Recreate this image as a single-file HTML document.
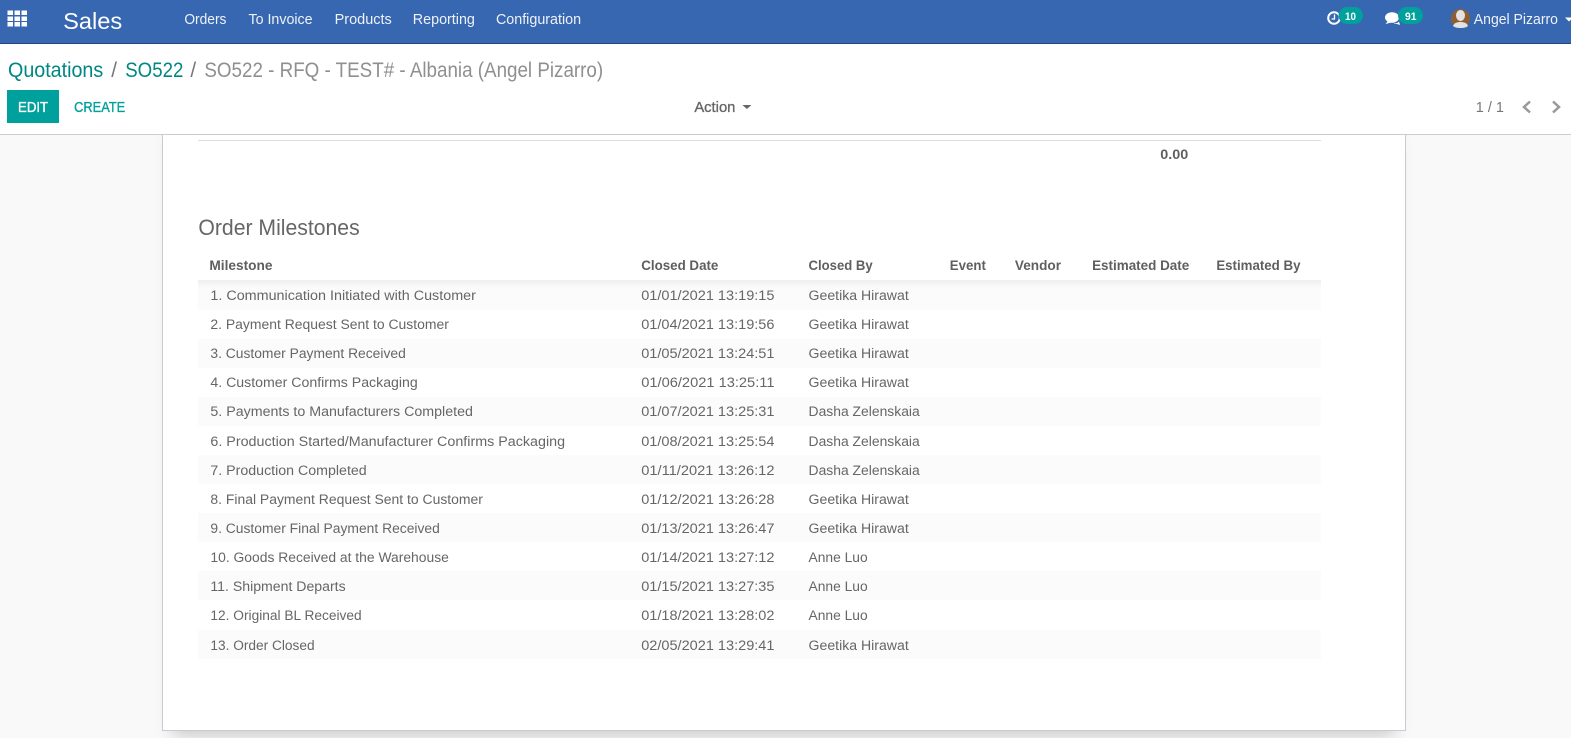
<!DOCTYPE html>
<html><head><meta charset="utf-8"><title>Sales</title>
<style>
html,body{margin:0;padding:0;width:1571px;height:738px;overflow:hidden;background:#f9f9f9}
svg{position:absolute;left:0;top:0;display:block}
text{font-family:"Liberation Sans",sans-serif;white-space:pre}
.nav{font-size:14.500px;fill:#eef2f9}
.t{font-size:14px;fill:#666}
.h{font-size:14px;font-weight:bold;fill:#5f5f5f}
.bc{font-size:20.800px}
.m{font-size:15px;stroke-width:.35}
</style></head><body>
<svg width="1571" height="738" viewBox="0 0 1571 738" xmlns="http://www.w3.org/2000/svg">
<defs>
<filter id="s" x="-10%" y="-10%" width="120%" height="120%"><feGaussianBlur stdDeviation="9"/></filter>
<linearGradient id="g" x1="0" y1="0" x2="0" y2="1"><stop offset="0" stop-color="#000" stop-opacity=".05"/><stop offset="1" stop-color="#000" stop-opacity="0"/></linearGradient>
</defs>
<rect width="1571" height="738" fill="#f9f9f9"/>
<!-- sheet -->
<rect x="172" y="135" width="1223" height="600" fill="#000" opacity=".2" filter="url(#s)"/>
<rect x="162.500" y="125.500" width="1243" height="605" fill="#fff" stroke="#c9cbd3"/>
<!-- control panel -->
<rect y="44" width="1571" height="90" fill="#fff"/>
<rect y="134" width="1571" height="1" fill="#ccc"/>
<!-- navbar -->
<rect width="1571" height="43" fill="#3767b1"/>
<rect y="43" width="1571" height="1" fill="#25467c"/>
<g fill="#fff">
<rect x="7.500" y="10.500" width="5.500" height="4.500"/><rect x="14.500" y="10.500" width="5.500" height="4.500"/><rect x="21.500" y="10.500" width="5.500" height="4.500"/>
<rect x="7.500" y="16.500" width="5.500" height="4.500"/><rect x="14.500" y="16.500" width="5.500" height="4.500"/><rect x="21.500" y="16.500" width="5.500" height="4.500"/>
<rect x="7.500" y="22" width="5.500" height="4.500"/><rect x="14.500" y="22" width="5.500" height="4.500"/><rect x="21.500" y="22" width="5.500" height="4.500"/>
</g>
<!-- activity -->
<circle cx="1334" cy="18" r="5.800" fill="none" stroke="#fff" stroke-width="2"/>
<path d="M1334.500 14.500v4.500h-3" fill="none" stroke="#fff" stroke-width="1.300"/>
<rect x="1338.500" y="7" width="24.500" height="17" rx="8.500" fill="#00a09d"/>
<text x="1345" y="20" font-size="11" font-weight="bold" fill="#fff" textLength="11" lengthAdjust="spacingAndGlyphs">10</text>
<!-- messages -->
<ellipse cx="1392" cy="17.500" rx="7" ry="5.300" fill="#fff"/>
<path d="M1388 21l-2.500 3 6-1.500z" fill="#fff"/>
<path d="M1394 23.500c2 0 4-.5 5-2l1 3.500-3-1h-3z" fill="#fff"/>
<rect x="1398" y="7" width="25" height="17" rx="8.500" fill="#00a09d"/>
<text x="1405" y="20" font-size="11" font-weight="bold" fill="#fff" textLength="11.500" lengthAdjust="spacingAndGlyphs">91</text>
<!-- user -->
<circle cx="1460.500" cy="18.500" r="9.500" fill="#8e5f33"/>
<ellipse cx="1460.500" cy="15.500" rx="4.500" ry="5.500" fill="#e3e3e3"/>
<path d="M1453 26c1-3 4-4 7.500-4s6.500 1 7.500 4c-2 1.500-4 2-7.500 2s-5.500-.5-7.500-2z" fill="#e3e3e3"/>
<path d="M1565 17.500h8l-4 4z" fill="#fff"/>
<!-- button -->
<rect x="7" y="90" width="52" height="33" fill="#00a09d"/>
<!-- pager arrows -->
<path d="M1530 101.500l-6 5.500 6 5.500" fill="none" stroke="#999" stroke-width="2.500"/>
<path d="M1553 101.500l6 5.500-6 5.500" fill="none" stroke="#999" stroke-width="2.500"/>
<!-- sheet content blocks -->
<rect x="198" y="140" width="1123" height="1" fill="#ddd"/>
<g fill="#fbfbfb">
<rect x="198" y="280" width="1123" height="30"/>
<rect x="198" y="339" width="1123" height="29"/>
<rect x="198" y="397" width="1123" height="29"/>
<rect x="198" y="455" width="1123" height="29"/>
<rect x="198" y="513" width="1123" height="29"/>
<rect x="198" y="571" width="1123" height="29"/>
<rect x="198" y="630" width="1123" height="29"/>
</g>
<rect x="198" y="280" width="1123" height="8" fill="url(#g)"/>
<g transform="scale(1.00191,1)">
<text x="63" y="29" font-size="23.500" fill="#fff" textLength="59" lengthAdjust="spacingAndGlyphs">Sales</text>
<text class="nav" x="184" y="24" textLength="42" lengthAdjust="spacingAndGlyphs">Orders</text>
<text class="nav" x="248" y="24" textLength="64" lengthAdjust="spacingAndGlyphs">To Invoice</text>
<text class="nav" x="334" y="24" textLength="57" lengthAdjust="spacingAndGlyphs">Products</text>
<text class="nav" x="412" y="24" textLength="62" lengthAdjust="spacingAndGlyphs">Reporting</text>
<text class="nav" x="495" y="24" textLength="85" lengthAdjust="spacingAndGlyphs">Configuration</text>
<text class="nav" x="1471" y="24" textLength="84" lengthAdjust="spacingAndGlyphs">Angel Pizarro</text>
<text class="bc" x="8" y="77" fill="#008784" textLength="95" lengthAdjust="spacingAndGlyphs">Quotations</text>
<text class="bc" x="111" y="77" fill="#777">/</text>
<text class="bc" x="125" y="77" fill="#008784" textLength="58" lengthAdjust="spacingAndGlyphs">SO522</text>
<text class="bc" x="190" y="77" fill="#777">/</text>
<text class="bc" x="204" y="77" fill="#8f8f8f" textLength="398" lengthAdjust="spacingAndGlyphs">SO522 - RFQ - TEST# - Albania (Angel Pizarro)</text>
<text class="m" x="18" y="112" fill="#fff" stroke="#fff" textLength="30" lengthAdjust="spacingAndGlyphs">EDIT</text>
<text class="m" x="74" y="112" fill="#00a09d" stroke="#00a09d" textLength="51" lengthAdjust="spacingAndGlyphs">CREATE</text>
<text class="m" x="693" y="112" fill="#666" stroke="#666" textLength="41" lengthAdjust="spacingAndGlyphs">Action</text>
<path d="M741 105h9l-4.500 4z" fill="#666"/>
<text x="1473" y="112" font-size="14.500" fill="#777" textLength="28" lengthAdjust="spacingAndGlyphs">1 / 1</text>
<text x="1158" y="159" font-size="14" font-weight="bold" fill="#5f5f5f" textLength="28" lengthAdjust="spacingAndGlyphs">0.00</text>
<text x="198" y="235" font-size="21.800" fill="#666" textLength="161" lengthAdjust="spacingAndGlyphs">Order Milestones</text>
<text class="h" x="209" y="270" textLength="63" lengthAdjust="spacingAndGlyphs">Milestone</text>
<text class="h" x="640" y="270" textLength="77" lengthAdjust="spacingAndGlyphs">Closed Date</text>
<text class="h" x="807" y="270" textLength="64" lengthAdjust="spacingAndGlyphs">Closed By</text>
<text class="h" x="948" y="270" textLength="36" lengthAdjust="spacingAndGlyphs">Event</text>
<text class="h" x="1013" y="270" textLength="46" lengthAdjust="spacingAndGlyphs">Vendor</text>
<text class="h" x="1090" y="270" textLength="97" lengthAdjust="spacingAndGlyphs">Estimated Date</text>
<text class="h" x="1214" y="270" textLength="84" lengthAdjust="spacingAndGlyphs">Estimated By</text>
<text class="t" x="210" y="300" textLength="265" lengthAdjust="spacingAndGlyphs">1. Communication Initiated with Customer</text>
<text class="t" x="640" y="300" textLength="133" lengthAdjust="spacingAndGlyphs">01/01/2021 13:19:15</text>
<text class="t" x="807" y="300" textLength="100" lengthAdjust="spacingAndGlyphs">Geetika Hirawat</text>
<text class="t" x="210" y="329" textLength="238" lengthAdjust="spacingAndGlyphs">2. Payment Request Sent to Customer</text>
<text class="t" x="640" y="329" textLength="133" lengthAdjust="spacingAndGlyphs">01/04/2021 13:19:56</text>
<text class="t" x="807" y="329" textLength="100" lengthAdjust="spacingAndGlyphs">Geetika Hirawat</text>
<text class="t" x="210" y="358" textLength="195" lengthAdjust="spacingAndGlyphs">3. Customer Payment Received</text>
<text class="t" x="640" y="358" textLength="133" lengthAdjust="spacingAndGlyphs">01/05/2021 13:24:51</text>
<text class="t" x="807" y="358" textLength="100" lengthAdjust="spacingAndGlyphs">Geetika Hirawat</text>
<text class="t" x="210" y="387" textLength="207" lengthAdjust="spacingAndGlyphs">4. Customer Confirms Packaging</text>
<text class="t" x="640" y="387" textLength="133" lengthAdjust="spacingAndGlyphs">01/06/2021 13:25:11</text>
<text class="t" x="807" y="387" textLength="100" lengthAdjust="spacingAndGlyphs">Geetika Hirawat</text>
<text class="t" x="210" y="416" textLength="262" lengthAdjust="spacingAndGlyphs">5. Payments to Manufacturers Completed</text>
<text class="t" x="640" y="416" textLength="133" lengthAdjust="spacingAndGlyphs">01/07/2021 13:25:31</text>
<text class="t" x="807" y="416" textLength="111" lengthAdjust="spacingAndGlyphs">Dasha Zelenskaia</text>
<text class="t" x="210" y="446" textLength="354" lengthAdjust="spacingAndGlyphs">6. Production Started/Manufacturer Confirms Packaging</text>
<text class="t" x="640" y="446" textLength="133" lengthAdjust="spacingAndGlyphs">01/08/2021 13:25:54</text>
<text class="t" x="807" y="446" textLength="111" lengthAdjust="spacingAndGlyphs">Dasha Zelenskaia</text>
<text class="t" x="210" y="475" textLength="156" lengthAdjust="spacingAndGlyphs">7. Production Completed</text>
<text class="t" x="640" y="475" textLength="133" lengthAdjust="spacingAndGlyphs">01/11/2021 13:26:12</text>
<text class="t" x="807" y="475" textLength="111" lengthAdjust="spacingAndGlyphs">Dasha Zelenskaia</text>
<text class="t" x="210" y="504" textLength="272" lengthAdjust="spacingAndGlyphs">8. Final Payment Request Sent to Customer</text>
<text class="t" x="640" y="504" textLength="133" lengthAdjust="spacingAndGlyphs">01/12/2021 13:26:28</text>
<text class="t" x="807" y="504" textLength="100" lengthAdjust="spacingAndGlyphs">Geetika Hirawat</text>
<text class="t" x="210" y="533" textLength="229" lengthAdjust="spacingAndGlyphs">9. Customer Final Payment Received</text>
<text class="t" x="640" y="533" textLength="133" lengthAdjust="spacingAndGlyphs">01/13/2021 13:26:47</text>
<text class="t" x="807" y="533" textLength="100" lengthAdjust="spacingAndGlyphs">Geetika Hirawat</text>
<text class="t" x="210" y="562" textLength="238" lengthAdjust="spacingAndGlyphs">10. Goods Received at the Warehouse</text>
<text class="t" x="640" y="562" textLength="133" lengthAdjust="spacingAndGlyphs">01/14/2021 13:27:12</text>
<text class="t" x="807" y="562" textLength="59" lengthAdjust="spacingAndGlyphs">Anne Luo</text>
<text class="t" x="210" y="591" textLength="135" lengthAdjust="spacingAndGlyphs">11. Shipment Departs</text>
<text class="t" x="640" y="591" textLength="133" lengthAdjust="spacingAndGlyphs">01/15/2021 13:27:35</text>
<text class="t" x="807" y="591" textLength="59" lengthAdjust="spacingAndGlyphs">Anne Luo</text>
<text class="t" x="210" y="620" textLength="151" lengthAdjust="spacingAndGlyphs">12. Original BL Received</text>
<text class="t" x="640" y="620" textLength="133" lengthAdjust="spacingAndGlyphs">01/18/2021 13:28:02</text>
<text class="t" x="807" y="620" textLength="59" lengthAdjust="spacingAndGlyphs">Anne Luo</text>
<text class="t" x="210" y="650" textLength="104" lengthAdjust="spacingAndGlyphs">13. Order Closed</text>
<text class="t" x="640" y="650" textLength="133" lengthAdjust="spacingAndGlyphs">02/05/2021 13:29:41</text>
<text class="t" x="807" y="650" textLength="100" lengthAdjust="spacingAndGlyphs">Geetika Hirawat</text>
</g>
</svg>
</body></html>
